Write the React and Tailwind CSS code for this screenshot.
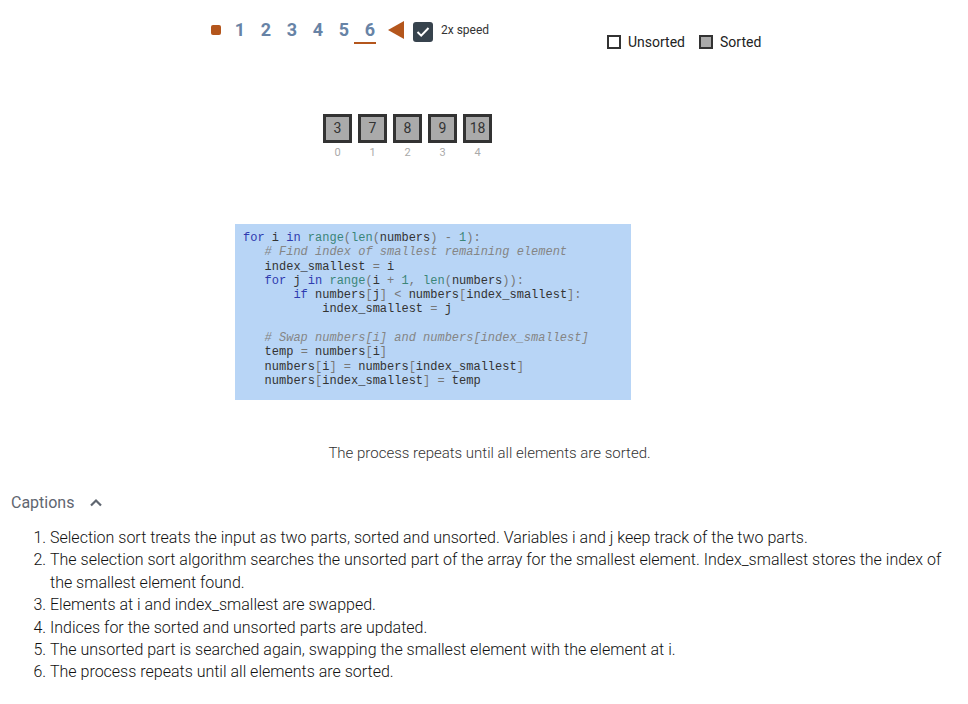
import React from "react";

const K = ({ children }) => <span className="text-[#2f3bb0]">{children}</span>;
const B = ({ children }) => <span className="text-[#3b8578]">{children}</span>;
const P = ({ children }) => <span className="text-[#777]">{children}</span>;
const N = ({ children }) => <span className="text-[#3b8578]">{children}</span>;
const C = ({ children }) => <span className="italic text-[#858585]">{children}</span>;

const lines = [
  <>
    <K>for</K> i <K>in</K> <B>range</B><P>(</P><B>len</B><P>(</P>numbers<P>)</P> <P>-</P> <N>1</N><P>):</P>
  </>,
  <>
    {"   "}<C># Find index of smallest remaining element</C>
  </>,
  <>
    {"   "}index_smallest <P>=</P> i
  </>,
  <>
    {"   "}<K>for</K> j <K>in</K> <B>range</B><P>(</P>i <P>+</P> <N>1</N><P>,</P> <B>len</B><P>(</P>numbers<P>)):</P>
  </>,
  <>
    {"       "}<K>if</K> numbers<P>[</P>j<P>]</P> <P>&lt;</P> numbers<P>[</P>index_smallest<P>]:</P>
  </>,
  <>
    {"           "}index_smallest <P>=</P> j
  </>,
  <>{" "}</>,
  <>
    {"   "}<C># Swap numbers[i] and numbers[index_smallest]</C>
  </>,
  <>
    {"   "}temp <P>=</P> numbers<P>[</P>i<P>]</P>
  </>,
  <>
    {"   "}numbers<P>[</P>i<P>]</P> <P>=</P> numbers<P>[</P>index_smallest<P>]</P>
  </>,
  <>
    {"   "}numbers<P>[</P>index_smallest<P>]</P> <P>=</P> temp
  </>,
];

const captions = [
  "Selection sort treats the input as two parts, sorted and unsorted. Variables i and j keep track of the two parts.",
  "The selection sort algorithm searches the unsorted part of the array for the smallest element. Index_smallest stores the index of the smallest element found.",
  "Elements at i and index_smallest are swapped.",
  "Indices for the sorted and unsorted parts are updated.",
  "The unsorted part is searched again, swapping the smallest element with the element at i.",
  "The process repeats until all elements are sorted.",
];

export default function App() {
  return (
    <div className="w-[968px] min-h-[704px] bg-white font-['Roboto',sans-serif] text-[#333]">
      {/* top row */}
      <div className="flex items-start">
        <div className="mt-[18px] ml-[211px] flex h-[24px] w-[396px] items-center">
          <div className="h-[10px] w-[10px] rounded-[2px] bg-[#b4561c]" />
          <div className="ml-[6px] flex items-center">
            {[1, 2, 3, 4, 5, 6].map((n) => (
              <div key={n} className="relative flex w-[26px] justify-center">
                <span className="text-[18px] font-bold leading-[24px] text-[#6783a6]">{n}</span>
                {n === 6 && (
                  <div className="absolute left-[-3px] top-[24px] h-[2px] w-[22px] bg-[#b4561c]" />
                )}
              </div>
            ))}
          </div>
          <svg width="16" height="18" viewBox="0 0 16 18" className="ml-[5px]">
            <polygon points="0,9 16,0 16,18" fill="#b4561c" />
          </svg>
          <div className="ml-[9px] mt-[3px] flex h-[20px] w-[20px] items-center justify-center rounded-[3px] bg-[#37434d]">
            <svg width="14" height="12" viewBox="0 0 14 12">
              <polyline points="1.5,6 5.2,9.6 12.5,2" fill="none" stroke="white" strokeWidth="2" />
            </svg>
          </div>
          <span className="ml-[8px] text-[12px] leading-[16px] text-[#333]">2x speed</span>
        </div>
        <div className="mt-[34px] flex h-[16px] items-center text-[14px] text-[#222]">
          <div className="h-[14px] w-[14px] border-2 border-[#333] bg-white" />
          <span className="ml-[7px]">Unsorted</span>
          <div className="ml-[14px] h-[14px] w-[14px] border-2 border-[#333] bg-[#aaaaaa]" />
          <span className="ml-[7px]">Sorted</span>
        </div>
      </div>

      {/* array */}
      <div className="mt-[64px] ml-[323px] flex gap-[6px]">
        {[3, 7, 8, 9, 18].map((v, i) => (
          <div key={i} className="flex w-[29px] flex-col items-center">
            <div className="flex h-[29px] w-[29px] items-center justify-center border-[3px] border-[#333] bg-[#aaaaaa] text-[14px] text-[#333]">
              {v}
            </div>
            <div className="mt-[3px] text-[11px] leading-[13px] text-[#aaaaaa]">{i}</div>
          </div>
        ))}
      </div>

      {/* code */}
      <div className="mt-[65px] ml-[235px] h-[176px] w-[396px] bg-[#b8d5f6] pt-[7px] pl-[8px]">
        <pre className="font-['Courier_New','Liberation_Mono',monospace] text-[12px] leading-[14.3px] text-[#333]">
          {lines.map((l, i) => (
            <div key={i} className="h-[14.3px]">{l}</div>
          ))}
        </pre>
      </div>

      <div className="mt-[43px] pl-[11px] text-center text-[15px] font-light leading-[20px] text-[#333]">
        The process repeats until all elements are sorted.
      </div>

      <div className="mt-[29px] ml-[11px] flex h-[22px] items-center text-[16px] text-[#5f6670]">
        <span>Captions</span>
        <svg width="12" height="9" viewBox="0 0 12 9" className="ml-[16px] mb-[2px]">
          <polyline points="1,7.5 6,2.5 11,7.5" fill="none" stroke="#5f6670" strokeWidth="2.2" />
        </svg>
      </div>

      <ol className="mt-[13px] ml-[50px] mr-[18px] list-decimal text-[16px] font-light leading-[22.4px] text-[#111]">
        {captions.map((c, i) => (
          <li key={i}>{c}</li>
        ))}
      </ol>
    </div>
  );
}
